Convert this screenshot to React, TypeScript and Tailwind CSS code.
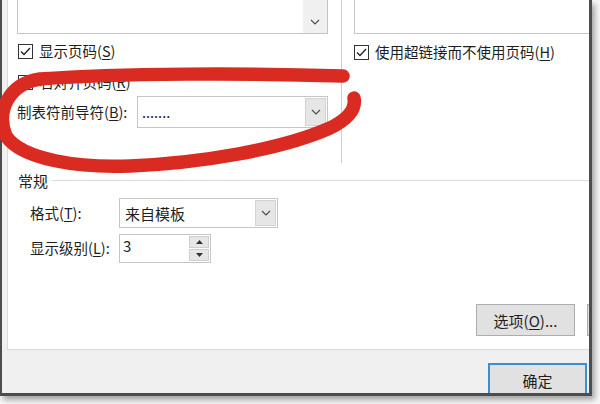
import React from "react";

function Chevron() {
  return (
    <svg width="10" height="6" viewBox="0 0 10 6" className="block">
      <path d="M1 1 L5 5 L9 1" fill="none" stroke="#4a4a4a" strokeWidth="1.1" />
    </svg>
  );
}

function CheckBox({ checked }: { checked: boolean }) {
  return (
    <div className="w-[15px] h-[15px] border border-[#333] bg-white flex items-center justify-center shrink-0">
      {checked && (
        <svg width="11" height="9" viewBox="0 0 11 9">
          <path d="M1 4.5 L4 7.5 L10 1" fill="none" stroke="#222" strokeWidth="1.3" />
        </svg>
      )}
    </div>
  );
}

function Key({ k }: { k: string }) {
  return (
    <>
      (<span className="underline underline-offset-2">{k}</span>)
    </>
  );
}

export default function App() {
  return (
    <div className="relative w-[600px] h-[404px] overflow-hidden bg-[#f9f9f9] font-['Noto_Sans_CJK_SC',sans-serif] text-[14.5px] text-[#1e1e1e]">
      {/* Dialog */}
      <div className="w-[592px] h-[396px] border-l-2 border-r-[3px] border-b-[3px] border-[#4d4d4d] bg-[#f0f0f0] flex flex-col shadow-[3px_4px_6px_rgba(0,0,0,0.35)]">
        {/* White tab page */}
        <div className="ml-[5px] h-[350px] shrink-0 bg-white border-l border-b border-[#dadada] flex flex-col overflow-hidden">
          {/* Preview columns */}
          <div className="flex h-[163px] shrink-0">
            <div className="w-[334px] border-r border-[#cfcfcf] pl-[9px] flex flex-col">
              <div className="w-[311px] h-[34px] border-x border-b border-[#c5c5c5] flex justify-end">
                <div className="w-[24px] bg-[#f0f0f0] flex items-end justify-center pb-[8px]">
                  <Chevron />
                </div>
              </div>
              <div className="mt-[9px] h-[16px] flex items-center gap-[6px] pl-[1px]">
                <CheckBox checked />
                <span className="leading-none">
                  显示页码<Key k="S" />
                </span>
              </div>
              <div className="mt-[15px] h-[16px] flex items-center gap-[6px] pl-[1px]">
                <CheckBox checked={false} />
                <span className="leading-none">
                  右对齐页码<Key k="R" />
                </span>
              </div>
              <div className="mt-[6px] h-[32px] flex items-center">
                <span className="w-[120px] shrink-0 leading-none">
                  制表符前导符<Key k="B" />:
                </span>
                <div className="w-[191px] h-[32px] border border-[#c5c5c5] flex items-center">
                  <span className="flex-1 pl-[4px] leading-none">.......</span>
                  <div className="w-[21px] h-[28px] mr-[1px] bg-[#e6e6e6] border border-[#d2d2d2] flex items-center justify-center">
                    <Chevron />
                  </div>
                </div>
              </div>
            </div>
            <div className="flex-1 pl-[12px] flex flex-col">
              <div className="h-[34px] border-l border-b border-[#c5c5c5]" />
              <div className="mt-[10px] h-[16px] flex items-center gap-[6px]">
                <CheckBox checked />
                <span className="leading-none">
                  使用超链接而不使用页码<Key k="H" />
                </span>
              </div>
            </div>
          </div>

          {/* 常规 group */}
          <div className="mt-[9px] h-[16px] flex items-center pl-[10px]">
            <span className="leading-none text-[15px]">常规</span>
            <div className="flex-1 h-px bg-[#dcdcdc] ml-[4px]" />
          </div>
          <div className="mt-[10px] h-[30px] flex items-center pl-[22px]">
            <span className="w-[89px] shrink-0 leading-none">
              格式<Key k="T" />:
            </span>
            <div className="w-[159px] h-[30px] border border-[#c5c5c5] flex items-center">
              <span className="flex-1 pl-[5px] leading-none text-[15px]">来自模板</span>
              <div className="w-[21px] h-[26px] mr-[1px] bg-[#e6e6e6] border border-[#d2d2d2] flex items-center justify-center">
                <Chevron />
              </div>
            </div>
          </div>
          <div className="mt-[6px] h-[29px] flex items-center pl-[22px]">
            <span className="w-[89px] shrink-0 leading-none">
              显示级别<Key k="L" />:
            </span>
            <div className="w-[92px] h-[29px] border border-[#c5c5c5] flex items-start">
              <span className="flex-1 pl-[3px] pt-[2px] leading-[18px] text-[15px]">3</span>
              <div className="w-[20px] h-[25px] mt-[1px] mr-[1px] flex flex-col gap-px">
                <div className="flex-1 bg-[#e6e6e6] border border-[#cfcfcf] flex items-center justify-center">
                  <svg width="7" height="4" viewBox="0 0 7 4">
                    <path d="M0 4 L3.5 0 L7 4 Z" fill="#333" />
                  </svg>
                </div>
                <div className="flex-1 bg-[#e6e6e6] border border-[#cfcfcf] flex items-center justify-center">
                  <svg width="7" height="4" viewBox="0 0 7 4">
                    <path d="M0 0 L3.5 4 L7 0 Z" fill="#333" />
                  </svg>
                </div>
              </div>
            </div>
          </div>

          {/* Buttons */}
          <div className="mt-auto mb-[13px] flex justify-end gap-[12px]">
            <button className="w-[99px] h-[32px] shrink-0 bg-[#e1e1e1] border border-[#adadad] text-[15px] leading-none">
              选项<Key k="O" />...
            </button>
            <button className="w-[99px] h-[32px] shrink-0 -mr-[97px] bg-[#e1e1e1] border border-[#adadad]" />
          </div>
        </div>

        {/* Footer */}
        <div className="flex-1 flex justify-end overflow-hidden">
          <button className="mt-[13px] mr-[2px] w-[99px] h-[40px] shrink-0 border-2 border-[#3b8ed0] bg-[#e1e1e1] flex justify-center pt-[8px] text-[15px] leading-none">
            确定
          </button>
        </div>
      </div>

      {/* Red hand-drawn mark */}
      <svg className="absolute inset-0 pointer-events-none" width="600" height="404" viewBox="0 0 600 404">
        <path
          d="M343 76 C 250 73, 120 73, 40 79 C 8 84, -4 112, 6 136 C 22 160, 80 168, 130 166 C 200 163, 280 150, 330 128 C 350 118, 356 108, 354 98"
          fill="none"
          stroke="#d92b22"
          strokeWidth="13.5"
          strokeLinecap="round"
          strokeLinejoin="round"
        />
      </svg>
    </div>
  );
}
